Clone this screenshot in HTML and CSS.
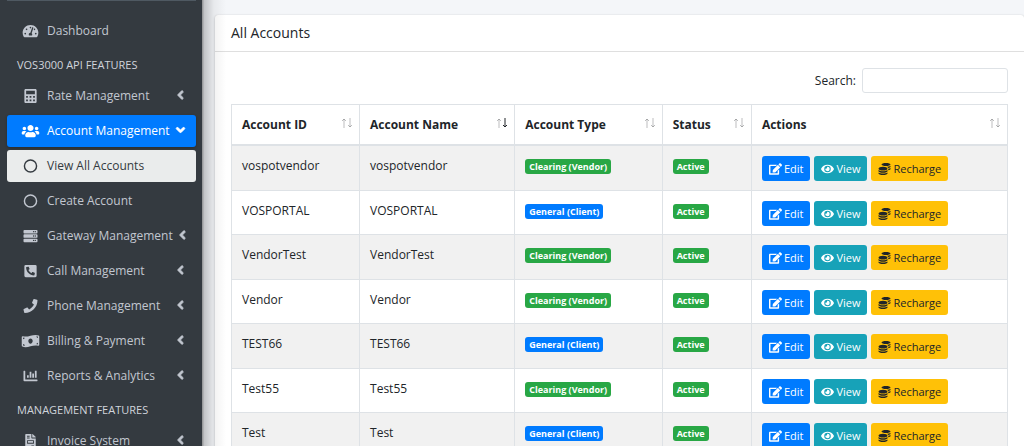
FILE: index.html
```html
<!DOCTYPE html>
<html lang="en">
<head>
  <meta charset="UTF-8">
  <meta name="viewport" content="width=device-width, initial-scale=1.0">
  <title>All Accounts</title>
  <link rel="stylesheet" href="styles.css">
</head>
<body>
  <svg class="sprite" aria-hidden="true">
    <symbol id="i-dashboard" viewBox="0 0 576 512"><path d="M288 32C128.94 32 0 160.94 0 320c0 52.8 14.25 102.26 39.06 144.8 5.61 9.62 16.3 15.2 27.44 15.2h443c11.14 0 21.83-5.58 27.44-15.2C561.75 422.26 576 372.8 576 320c0-159.06-128.94-288-288-288zm0 64c14.71 0 26.58 10.13 30.32 23.65-1.11 2.26-2.64 4.23-3.45 6.67l-9.22 27.67c-5.13 3.49-10.97 6.01-17.64 6.01-17.67 0-32-14.33-32-32S270.33 96 288 96zM96 384c-17.67 0-32-14.33-32-32s14.33-32 32-32 32 14.33 32 32-14.33 32-32 32zm48-160c-17.67 0-32-14.33-32-32s14.33-32 32-32 32 14.33 32 32-14.33 32-32 32zm246.77-72.41l-61.33 184C343.13 347.33 352 364.54 352 384c0 11.72-3.38 22.55-8.88 32H232.88c-5.5-9.45-8.88-20.28-8.88-32 0-33.94 26.5-61.43 59.9-63.59l61.34-184.01c4.17-12.56 17.73-19.45 30.36-15.17 12.57 4.19 19.35 17.79 15.17 30.36zm14.66 57.2l15.52-46.55c3.47-1.29 7.13-2.23 11.05-2.23 17.67 0 32 14.33 32 32s-14.33 32-32 32c-11.38-.01-20.89-6.28-26.57-15.22zM480 384c-17.67 0-32-14.33-32-32s14.33-32 32-32 32 14.33 32 32-14.33 32-32 32z"/></symbol>
    <symbol id="i-calculator" viewBox="0 0 448 512"><path fill-rule="evenodd" d="M400 0H48C22 0 0 22 0 48v416c0 26 22 48 48 48h352c26 0 48-22 48-48V48c0-26-22-48-48-48zM64 64h320v128H64zM64 256h64v64H64zM192 256h64v64h-64zM320 256h64v64h-64zM320 384h64v64h-64zM64 384h64v64H64zM192 384h64v64h-64z"/></symbol>
    <symbol id="i-users" viewBox="0 0 640 512"><path d="M96 224c35.3 0 64-28.7 64-64s-28.7-64-64-64-64 28.7-64 64 28.7 64 64 64zm448 0c35.3 0 64-28.7 64-64s-28.7-64-64-64-64 28.7-64 64 28.7 64 64 64zm32 32h-64c-17.6 0-33.5 7.1-45.1 18.6 40.3 22.1 68.9 62 75.1 109.4h66c17.7 0 32-14.3 32-32v-32c0-35.3-28.7-64-64-64zm-256 0c61.9 0 112-50.1 112-112S381.9 32 320 32 208 82.1 208 144s50.1 112 112 112zm76.8 32h-8.3c-20.8 10-43.9 16-68.5 16s-47.6-6-68.5-16h-8.3C179.6 288 128 339.6 128 403.2V432c0 26.5 21.5 48 48 48h288c26.5 0 48-21.5 48-48v-28.8c0-63.6-51.6-115.2-115.2-115.2zm-223.7-13.4C161.5 263.1 145.6 256 128 256H64c-35.3 0-64 28.7-64 64v32c0 17.7 14.3 32 32 32h65.9c6.3-47.4 34.9-87.3 75.2-109.4z"/></symbol>
    <symbol id="i-circle" viewBox="0 0 512 512"><circle cx="256" cy="256" r="222" fill="none" stroke="currentColor" stroke-width="52"/></symbol>
    <symbol id="i-server" viewBox="0 0 512 512"><path fill-rule="evenodd" d="M32 32h448a32 32 0 0 1 32 32v64a32 32 0 0 1-32 32H32a32 32 0 0 1-32-32V64a32 32 0 0 1 32-32zM344 96a24 24 0 1 0 48 0 24 24 0 1 0-48 0zM408 96a24 24 0 1 0 48 0 24 24 0 1 0-48 0zM32 192h448a32 32 0 0 1 32 32v64a32 32 0 0 1-32 32H32a32 32 0 0 1-32-32v-64a32 32 0 0 1 32-32zM344 256a24 24 0 1 0 48 0 24 24 0 1 0-48 0zM408 256a24 24 0 1 0 48 0 24 24 0 1 0-48 0zM32 352h448a32 32 0 0 1 32 32v64a32 32 0 0 1-32 32H32a32 32 0 0 1-32-32v-64a32 32 0 0 1 32-32zM344 416a24 24 0 1 0 48 0 24 24 0 1 0-48 0zM408 416a24 24 0 1 0 48 0 24 24 0 1 0-48 0z"/></symbol>
    <symbol id="i-call" viewBox="0 0 448 512"><path d="M400 32H48A48 48 0 0 0 0 80v352a48 48 0 0 0 48 48h352a48 48 0 0 0 48-48V80a48 48 0 0 0-48-48zm-16.39 307.37l-15 65A15 15 0 0 1 354 416C194 416 64 286.29 64 126a15.7 15.7 0 0 1 11.63-14.61l65-15A18.23 18.23 0 0 1 144 96a16.27 16.27 0 0 1 13.79 9.09l30 70A17.9 17.9 0 0 1 189 181a17 17 0 0 1-5.5 11.61l-37.89 31a231.91 231.91 0 0 0 110.78 110.78l31-37.89A17 17 0 0 1 299 291a17.85 17.85 0 0 1 5.91 1.21l70 30A16.25 16.25 0 0 1 384 336a17.41 17.41 0 0 1-.39 3.37z"/></symbol>
    <symbol id="i-phone" viewBox="0 0 512 512"><path d="M493.4 24.6l-104-24c-11.3-2.6-22.9 3.3-27.5 13.9l-48 112c-4.2 9.8-1.4 21.3 6.9 28l60.6 49.6c-36 76.7-98.9 140.5-177.2 177.2l-49.6-60.6c-6.8-8.3-18.2-11.1-28-6.9l-112 48C3.9 366.5-2 378.1.6 389.4l24 104C27.1 504.2 36.7 512 48 512c256.1 0 464-207.5 464-464 0-11.2-7.7-20.9-18.6-23.4z"/></symbol>
    <symbol id="i-money" viewBox="0 0 640 512"><path d="M621.16 54.46C582.37 38.19 543.55 32 504.75 32c-123.17-.01-246.33 62.34-369.5 62.34-30.89 0-61.76-3.92-92.65-13.72-3.47-1.1-6.95-1.62-10.35-1.62C15.04 79 0 92.32 0 110.81v317.26c0 12.63 7.23 24.6 18.84 29.46C57.63 473.81 96.45 480 135.25 480c123.17 0 246.34-62.35 369.51-62.35 30.89 0 61.76 3.92 92.65 13.72 3.47 1.1 6.95 1.62 10.35 1.62 17.21 0 32.25-13.32 32.25-31.81V83.93c-.01-12.64-7.24-24.6-18.85-29.47zM48 132.22c20.12 5.04 41.12 7.57 62.72 8.93C104.84 170.54 79 192.69 48 192.69v-60.47zm0 285v-47.78c34.37 0 62.18 27.27 63.71 61.4-22.53-1.81-43.59-6.31-63.71-13.62zM320 352c-44.19 0-80-42.99-80-96 0-53.02 35.82-96 80-96s80 42.98 80 96c0 53.03-35.83 96-80 96zm272 27.78c-17.52-4.39-35.71-6.85-54.32-8.44 5.87-26.08 27.5-45.88 54.32-49.28v57.72zm0-236.11c-30.89-3.91-54.86-29.7-55.81-61.55 19.54 2.17 38.09 6.23 55.81 12.66v48.89z"/></symbol>
    <symbol id="i-chart" viewBox="0 0 512 512"><path d="M332.8 320h38.4c6.4 0 12.8-6.4 12.8-12.8V172.8c0-6.4-6.4-12.8-12.8-12.8h-38.4c-6.4 0-12.8 6.4-12.8 12.8v134.4c0 6.4 6.4 12.8 12.8 12.8zm96 0h38.4c6.4 0 12.8-6.4 12.8-12.8V76.8c0-6.4-6.4-12.8-12.8-12.8h-38.4c-6.4 0-12.8 6.4-12.8 12.8v230.4c0 6.4 6.4 12.8 12.8 12.8zm-288 0h38.4c6.4 0 12.8-6.4 12.8-12.8v-70.4c0-6.4-6.4-12.8-12.8-12.8h-38.4c-6.4 0-12.8 6.4-12.8 12.8v70.4c0 6.4 6.4 12.8 12.8 12.8zm96 0h38.4c6.4 0 12.8-6.4 12.8-12.8V108.8c0-6.4-6.4-12.8-12.8-12.8h-38.4c-6.4 0-12.8 6.4-12.8 12.8v198.4c0 6.4 6.4 12.8 12.8 12.8zM496 384H64V80c0-8.84-7.16-16-16-16H16C7.16 64 0 71.16 0 80v336c0 17.67 14.33 32 32 32h464c8.84 0 16-7.16 16-16v-32c0-8.84-7.16-16-16-16z"/></symbol>
    <symbol id="i-invoice" viewBox="0 0 384 512"><path d="M288 256H96v64h192v-64zm89-151L279.1 7c-4.5-4.5-10.6-7-17-7H256v128h128v-6.1c0-6.3-2.5-12.4-7-16.9zm-153 31V0H24C10.7 0 0 10.7 0 24v464c0 13.3 10.7 24 24 24h336c13.3 0 24-10.7 24-24V160H248c-13.2 0-24-10.8-24-24zM64 72c0-4.42 3.58-8 8-8h80c4.42 0 8 3.58 8 8v16c0 4.42-3.58 8-8 8H72c-4.42 0-8-3.58-8-8V72zm0 64c0-4.42 3.58-8 8-8h80c4.42 0 8 3.58 8 8v16c0 4.42-3.58 8-8 8H72c-4.42 0-8-3.58-8-8v-16zm256 304c0 4.42-3.58 8-8 8h-80c-4.42 0-8-3.58-8-8v-16c0-4.42 3.58-8 8-8h80c4.42 0 8 3.58 8 8v16zm0-200v96c0 8.84-7.16 16-16 16H80c-8.84 0-16-7.16-16-16v-96c0-8.84 7.16-16 16-16h224c8.84 0 16 7.16 16 16z"/></symbol>
    <symbol id="i-angle" viewBox="0 0 256 512"><path stroke="currentColor" stroke-width="24" d="M31.7 239l136-136c9.4-9.4 24.6-9.4 33.9 0l22.6 22.6c9.4 9.4 9.4 24.6 0 33.9L127.9 256l96.4 96.4c9.4 9.4 9.4 24.6 0 33.9L201.7 409c-9.4 9.4-24.6 9.4-33.9 0l-136-136c-9.5-9.4-9.5-24.6-.1-34z"/></symbol>
    <symbol id="i-edit" viewBox="0 0 576 512"><path d="M402.6 83.2l90.2 90.2c3.8 3.8 3.8 10 0 13.8L274.4 405.6l-92.8 10.3c-12.4 1.4-22.9-9.1-21.5-21.5l10.3-92.8L388.8 83.2c3.8-3.8 10-3.8 13.8 0zm162-22.9l-48.8-48.8c-15.2-15.2-39.9-15.2-55.2 0l-35.4 35.4c-3.8 3.8-3.8 10 0 13.8l90.2 90.2c3.8 3.8 10 3.8 13.8 0l35.4-35.4c15.2-15.3 15.2-40 0-55.2zM384 346.2V448H64V128h229.8c3.2 0 6.2-1.3 8.5-3.5l40-40c7.6-7.6 2.2-20.5-8.5-20.5H48C21.5 64 0 85.5 0 112v352c0 26.5 21.5 48 48 48h352c26.5 0 48-21.5 48-48V306.2c0-10.7-12.9-16-20.5-8.5l-40 40c-2.2 2.3-3.5 5.3-3.5 8.5z"/></symbol>
    <symbol id="i-eye" viewBox="0 0 576 512"><path d="M572.52 241.4C518.29 135.59 410.93 64 288 64S57.68 135.64 3.48 241.41a32.35 32.35 0 0 0 0 29.19C57.71 376.41 165.07 448 288 448s230.32-71.64 284.52-177.41a32.35 32.35 0 0 0 0-29.19zM288 400a144 144 0 1 1 144-144 143.93 143.93 0 0 1-144 144zm0-240a95.31 95.31 0 0 0-25.31 3.79 47.85 47.85 0 0 1-66.9 66.9A95.78 95.78 0 1 0 288 160z"/></symbol>
    <symbol id="i-coins" viewBox="0 0 512 512"><path d="M0 405.3V448c0 35.3 86 64 192 64s192-28.7 192-64v-42.7C342.7 434.4 267.2 448 192 448S41.3 434.4 0 405.3zM320 128c106 0 192-28.7 192-64S426 0 320 0 128 28.7 128 64s86 64 192 64zM0 300.4V352c0 35.3 86 64 192 64s192-28.7 192-64v-51.6c-41.3 34-116.9 51.6-192 51.6S41.3 334.4 0 300.4zm416 11c57.3-11.1 96-31.7 96-55.4v-42.7c-23.2 16.4-57.3 27.6-96 34.5v63.6zM192 160C86 160 0 195.8 0 240s86 80 192 80 192-35.8 192-80-86-80-192-80zm219.3 56.3c60-10.8 100.7-32 100.7-56.3v-42.7c-35.5 25.1-96.5 38.6-160.7 41.8 29.5 14.3 51.2 33.5 60 57.2z"/></symbol>
    <symbol id="i-sort" viewBox="0 0 12 12"><path class="sort-up" d="M3 11V2M1 4l2-2 2 2"/><path class="sort-down" d="M9 1v9M7 8l2 2 2-2"/></symbol>
  </svg>

  <div class="wrapper">
    <aside class="sidebar">
      <nav class="nav">
        <a class="nav-link" href="#"><svg class="nav-icon"><use href="#i-dashboard"/></svg>Dashboard</a>
        <div class="nav-header">VOS3000 API FEATURES</div>
        <a class="nav-link" href="#"><svg class="nav-icon"><use href="#i-calculator"/></svg>Rate Management<svg class="angle"><use href="#i-angle"/></svg></a>
        <a class="nav-link active" href="#"><svg class="nav-icon"><use href="#i-users"/></svg>Account Management<svg class="angle open"><use href="#i-angle"/></svg></a>
        <a class="nav-link current" href="#"><svg class="nav-icon"><use href="#i-circle"/></svg>View All Accounts</a>
        <a class="nav-link" href="#"><svg class="nav-icon"><use href="#i-circle"/></svg>Create Account</a>
        <a class="nav-link" href="#"><svg class="nav-icon"><use href="#i-server"/></svg>Gateway Management<svg class="angle"><use href="#i-angle"/></svg></a>
        <a class="nav-link" href="#"><svg class="nav-icon"><use href="#i-call"/></svg>Call Management<svg class="angle"><use href="#i-angle"/></svg></a>
        <a class="nav-link" href="#"><svg class="nav-icon"><use href="#i-phone"/></svg>Phone Management<svg class="angle"><use href="#i-angle"/></svg></a>
        <a class="nav-link" href="#"><svg class="nav-icon"><use href="#i-money"/></svg>Billing &amp; Payment<svg class="angle"><use href="#i-angle"/></svg></a>
        <a class="nav-link" href="#"><svg class="nav-icon"><use href="#i-chart"/></svg>Reports &amp; Analytics<svg class="angle"><use href="#i-angle"/></svg></a>
        <div class="nav-header">MANAGEMENT FEATURES</div>
        <a class="nav-link" href="#"><svg class="nav-icon"><use href="#i-invoice"/></svg>Invoice System<svg class="angle"><use href="#i-angle"/></svg></a>
      </nav>
    </aside>

    <main class="content">
      <div class="card">
        <h1 class="card-header">All Accounts</h1>
        <div class="card-body">
          <div class="filter">
            <label for="search">Search:</label>
            <input type="search" id="search">
          </div>

          <table class="accounts">
            <colgroup>
              <col class="col-id">
              <col class="col-name">
              <col class="col-type">
              <col class="col-status">
              <col>
            </colgroup>
            <thead>
              <tr>
                <th><button class="sort">Account ID<svg><use href="#i-sort"/></svg></button></th>
                <th><button class="sort desc">Account Name<svg><use href="#i-sort"/></svg></button></th>
                <th><button class="sort">Account Type<svg><use href="#i-sort"/></svg></button></th>
                <th><button class="sort">Status<svg><use href="#i-sort"/></svg></button></th>
                <th><button class="sort">Actions<svg><use href="#i-sort"/></svg></button></th>
              </tr>
            </thead>
            <tbody>
              <tr>
                <td>vospotvendor</td>
                <td>vospotvendor</td>
                <td><span class="badge success">Clearing (Vendor)</span></td>
                <td><span class="badge success">Active</span></td>
                <td>
                  <div class="actions">
                    <button class="btn edit"><svg><use href="#i-edit"/></svg>Edit</button>
                    <button class="btn view"><svg><use href="#i-eye"/></svg>View</button>
                    <button class="btn recharge"><svg><use href="#i-coins"/></svg>Recharge</button>
                  </div>
                </td>
              </tr>
              <tr>
                <td>VOSPORTAL</td>
                <td>VOSPORTAL</td>
                <td><span class="badge primary">General (Client)</span></td>
                <td><span class="badge success">Active</span></td>
                <td>
                  <div class="actions">
                    <button class="btn edit"><svg><use href="#i-edit"/></svg>Edit</button>
                    <button class="btn view"><svg><use href="#i-eye"/></svg>View</button>
                    <button class="btn recharge"><svg><use href="#i-coins"/></svg>Recharge</button>
                  </div>
                </td>
              </tr>
              <tr>
                <td>VendorTest</td>
                <td>VendorTest</td>
                <td><span class="badge success">Clearing (Vendor)</span></td>
                <td><span class="badge success">Active</span></td>
                <td>
                  <div class="actions">
                    <button class="btn edit"><svg><use href="#i-edit"/></svg>Edit</button>
                    <button class="btn view"><svg><use href="#i-eye"/></svg>View</button>
                    <button class="btn recharge"><svg><use href="#i-coins"/></svg>Recharge</button>
                  </div>
                </td>
              </tr>
              <tr>
                <td>Vendor</td>
                <td>Vendor</td>
                <td><span class="badge success">Clearing (Vendor)</span></td>
                <td><span class="badge success">Active</span></td>
                <td>
                  <div class="actions">
                    <button class="btn edit"><svg><use href="#i-edit"/></svg>Edit</button>
                    <button class="btn view"><svg><use href="#i-eye"/></svg>View</button>
                    <button class="btn recharge"><svg><use href="#i-coins"/></svg>Recharge</button>
                  </div>
                </td>
              </tr>
              <tr>
                <td>TEST66</td>
                <td>TEST66</td>
                <td><span class="badge primary">General (Client)</span></td>
                <td><span class="badge success">Active</span></td>
                <td>
                  <div class="actions">
                    <button class="btn edit"><svg><use href="#i-edit"/></svg>Edit</button>
                    <button class="btn view"><svg><use href="#i-eye"/></svg>View</button>
                    <button class="btn recharge"><svg><use href="#i-coins"/></svg>Recharge</button>
                  </div>
                </td>
              </tr>
              <tr>
                <td>Test55</td>
                <td>Test55</td>
                <td><span class="badge success">Clearing (Vendor)</span></td>
                <td><span class="badge success">Active</span></td>
                <td>
                  <div class="actions">
                    <button class="btn edit"><svg><use href="#i-edit"/></svg>Edit</button>
                    <button class="btn view"><svg><use href="#i-eye"/></svg>View</button>
                    <button class="btn recharge"><svg><use href="#i-coins"/></svg>Recharge</button>
                  </div>
                </td>
              </tr>
              <tr>
                <td>Test</td>
                <td>Test</td>
                <td><span class="badge primary">General (Client)</span></td>
                <td><span class="badge success">Active</span></td>
                <td>
                  <div class="actions">
                    <button class="btn edit"><svg><use href="#i-edit"/></svg>Edit</button>
                    <button class="btn view"><svg><use href="#i-eye"/></svg>View</button>
                    <button class="btn recharge"><svg><use href="#i-coins"/></svg>Recharge</button>
                  </div>
                </td>
              </tr>
            </tbody>
          </table>
        </div>
      </div>
    </main>
  </div>
</body>
</html>
```

FILE: styles.css
```css
* { box-sizing: border-box; }
body {
  margin: 0;
  font-family: 'Segoe UI', 'Open Sans', 'Noto Sans', sans-serif;
  font-size: 12px;
  line-height: 20px;
  color: #212529;
  background-color: #f4f6f9;
}
svg { fill: currentColor; flex-shrink: 0; }
.sprite { display: none; }
button { font-family: inherit; cursor: pointer; }

.wrapper {
  display: flex;
  height: 100vh;
  overflow: hidden;
}

/* Sidebar */
.sidebar {
  position: relative;
  flex: 0 0 202px;
  min-width: 0;
  padding: 0 6px 0 7px;
  background-color: #343a40;
}
.sidebar::after { /* shadow over the content */
  content: "";
  position: absolute;
  top: 0;
  bottom: 0;
  left: 100%;
  width: 24px;
  pointer-events: none;
  background: linear-gradient(to right, rgba(0,0,0,0.42), rgba(0,0,0,0.2) 10%, rgba(0,0,0,0.05) 50%, rgba(0,0,0,0));
}
.nav {
  border-top: 1px solid #4f5962;
  padding-top: 14px;
}
.nav-link {
  display: flex;
  align-items: center;
  gap: 6px;
  height: 32px;
  margin-bottom: 3px;
  padding: 0 12px 0 13px;
  border-radius: 3px;
  color: #c2c7d0;
  text-decoration: none;
  white-space: nowrap;
}
.nav-link:hover { color: #fff; }
.nav-link.active {
  background-color: #007bff;
  color: #fff;
  box-shadow: 0 1px 3px rgba(0,0,0,0.24);
}
.nav-link.current { background-color: #eaecec; color: #343a40; }
.nav-icon { width: 21px; height: 14px; }
.angle {
  width: 7px;
  height: 14px;
  margin: 0 0 2px auto;
}
.angle.open { transform: rotate(-90deg); }
.nav-header {
  height: 30px;
  padding: 5px 10px;
  font-size: 11px;
  color: #d0d4db;
  white-space: nowrap;
}

/* Content */
.content {
  flex: 1;
  min-width: 0;
  padding: 15px 0 0 13px;
}
.card {
  background-color: #fff;
  border-radius: 3px;
  box-shadow: 0 0 1px rgba(0,0,0,0.13), 0 1px 3px rgba(0,0,0,0.2);
}
.card-header {
  margin: 0;
  padding: 8px 16px;
  border-bottom: 1px solid #dfdfdf;
  font-size: 14px;
  font-weight: 400;
}
.card-body { padding: 16px; }
.filter {
  display: flex;
  justify-content: flex-end;
  align-items: center;
  gap: 6px;
  margin-bottom: 11px;
}
.filter input {
  width: 146px;
  height: 25px;
  padding: 3px 6px;
  border: 1px solid #dee2e6;
  border-radius: 3px;
  font: inherit;
}

.accounts {
  width: 100%;
  table-layout: fixed;
  border-collapse: collapse;
}
.col-id { width: 16.5%; }
.col-name { width: 20%; }
.col-type { width: 19%; }
.col-status { width: 11.5%; }
.accounts th, .accounts td {
  padding: 10px 10px 9px;
  border: 1px solid #dee2e6;
  text-align: left;
  vertical-align: top;
}
.accounts th {
  padding: 0;
  border-bottom-width: 2px;
}
.accounts tbody tr:nth-child(odd) { background-color: #f1f1f1; }
.accounts tbody tr:nth-child(even) td { padding-bottom: 8px; }
.sort {
  display: flex;
  justify-content: space-between;
  align-items: center;
  width: 100%;
  height: 39px;
  padding: 0 6px 0 10px;
  border: 0;
  background: none;
  color: inherit;
  font-size: 12px;
  font-weight: 700;
}
.sort svg {
  width: 12px;
  height: 12px;
  margin-bottom: 3px;
  fill: none;
  stroke: currentColor;
  --up: 0.3;
  --down: 0.3;
}
.sort.desc svg { --down: 1; }
.sort-up { opacity: var(--up); }
.sort-down { opacity: var(--down); }

.badge {
  display: inline-block;
  padding: 0 4px;
  border-radius: 3px;
  color: #fff;
  font-size: 9px;
  font-weight: 700;
  line-height: 15px;
  white-space: nowrap;
}
.success { background-color: #28a745; }
.primary { background-color: #007bff; }

.actions { display: flex; gap: 4px; }
.btn {
  display: flex;
  align-items: center;
  gap: 2px;
  height: 25px;
  padding: 0 7px;
  border: 0;
  border-radius: 3px;
  color: #fff;
  font-size: 11px;
}
.btn svg { width: 13px; height: 12px; }
.edit { background-color: #007bff; }
.view { background-color: #17a2b8; }
.recharge { background-color: #ffc107; color: #212529; }
```
